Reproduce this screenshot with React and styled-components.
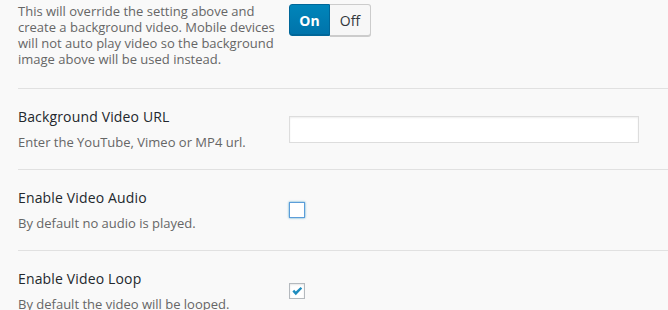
import React from 'react'
import styled, { createGlobalStyle } from 'styled-components'

const GlobalStyle = createGlobalStyle`
  html, body {
    margin: 0;
    padding: 0;
    background: #f9f9f9;
  }
  body {
    font-family: "Open Sans", "Liberation Sans", sans-serif;
    overflow: hidden;
  }
`

const Page = styled.div`
  width: 668px;
  height: 310px;
  overflow: hidden;
  background: #f9f9f9;
`

const Row = styled.div`
  display: grid;
  grid-template-columns: 271px 1fr;
  align-items: ${({ $top }) => ($top ? 'start' : 'center')};
  margin-left: 18px;
  padding: ${({ $top }) => ($top ? '3px 0 21px' : '18px 0 17px')};
  border-top: ${({ $top }) => ($top ? 'none' : '1px solid #e1e1e1')};
`

const LabelCell = styled.div`
  display: flex;
  flex-direction: column;
  gap: 5px;
`

const Label = styled.div`
  font-size: 14px;
  line-height: 20px;
  font-weight: 500;
  letter-spacing: 0.15px;
  color: #23282d;
`

const Description = styled.div`
  font-size: 13px;
  line-height: ${({ $tight }) => ($tight ? '16px' : '20px')};
  color: #666;
  width: ${({ $tight }) => ($tight ? '262px' : 'auto')};
`

const Field = styled.div`
  display: flex;
  align-items: center;
`

const Toggle = styled.div`
  display: flex;
  margin-top: 1px;
  height: 32px;
`

const ToggleButton = styled.div`
  display: flex;
  align-items: center;
  justify-content: center;
  box-sizing: border-box;
  width: 41px;
  height: 32px;
  font-size: 14px;
  font-weight: ${({ $active }) => ($active ? 700 : 400)};
  color: ${({ $active }) => ($active ? '#fff' : '#32373c')};
  background: ${({ $active }) =>
    $active ? 'linear-gradient(#0085ba, #0073aa)' : '#f7f7f7'};
  border: 1px solid ${({ $active }) => ($active ? '#006799' : '#cccccc')};
  border-radius: ${({ $active }) => ($active ? '3px 0 0 3px' : '0 3px 3px 0')};
  border-left-width: ${({ $active }) => ($active ? '1px' : '0')};
  box-shadow: ${({ $active }) =>
    $active ? 'inset 0 -1px 0 #006799' : '0 1px 0 #cccccc'};
`

const TextInput = styled.input`
  box-sizing: border-box;
  width: 350px;
  height: 27px;
  margin: 0;
  padding: 3px 5px;
  border: 1px solid #dddddd;
  background: #fff;
  box-shadow: inset 0 1px 2px rgba(0, 0, 0, 0.07);
  outline: none;
  font-family: inherit;
  font-size: 14px;
`

const CheckBox = styled.span`
  display: inline-flex;
  align-items: center;
  justify-content: center;
  box-sizing: border-box;
  width: 16px;
  height: 16px;
  margin-bottom: 2px;
  background: #fff;
  border: 1px solid ${({ $focus }) => ($focus ? '#5b9dd9' : '#b4b9be')};
  box-shadow: ${({ $focus }) =>
    $focus
      ? '0 0 2px rgba(30, 140, 190, 0.8)'
      : 'inset 0 1px 2px rgba(0, 0, 0, 0.1)'};
`

const Check = () => (
  <svg width="12" height="12" viewBox="0 0 12 12">
    <path d="M1.4 6.4 L3.2 4.8 L4.8 6.6 L9.6 2 L11.2 3.6 L4.8 10.2 Z" fill="#1e8cbe" />
  </svg>
)

const App = () => {
  return (
    <Page>
      <GlobalStyle />
      <Row $top>
        <Description $tight>
          This will override the setting above and create a background video. Mobile devices
          will not auto play video so the background image above will be used instead.
        </Description>
        <Toggle>
          <ToggleButton $active>On</ToggleButton>
          <ToggleButton>Off</ToggleButton>
        </Toggle>
      </Row>
      <Row>
        <LabelCell>
          <Label>Background Video URL</Label>
          <Description>Enter the YouTube, Vimeo or MP4 url.</Description>
        </LabelCell>
        <Field>
          <TextInput type="text" />
        </Field>
      </Row>
      <Row>
        <LabelCell>
          <Label>Enable Video Audio</Label>
          <Description>By default no audio is played.</Description>
        </LabelCell>
        <Field>
          <CheckBox $focus />
        </Field>
      </Row>
      <Row>
        <LabelCell>
          <Label>Enable Video Loop</Label>
          <Description>By default the video will be looped.</Description>
        </LabelCell>
        <Field>
          <CheckBox>
            <Check />
          </CheckBox>
        </Field>
      </Row>
    </Page>
  )
}

export default App
